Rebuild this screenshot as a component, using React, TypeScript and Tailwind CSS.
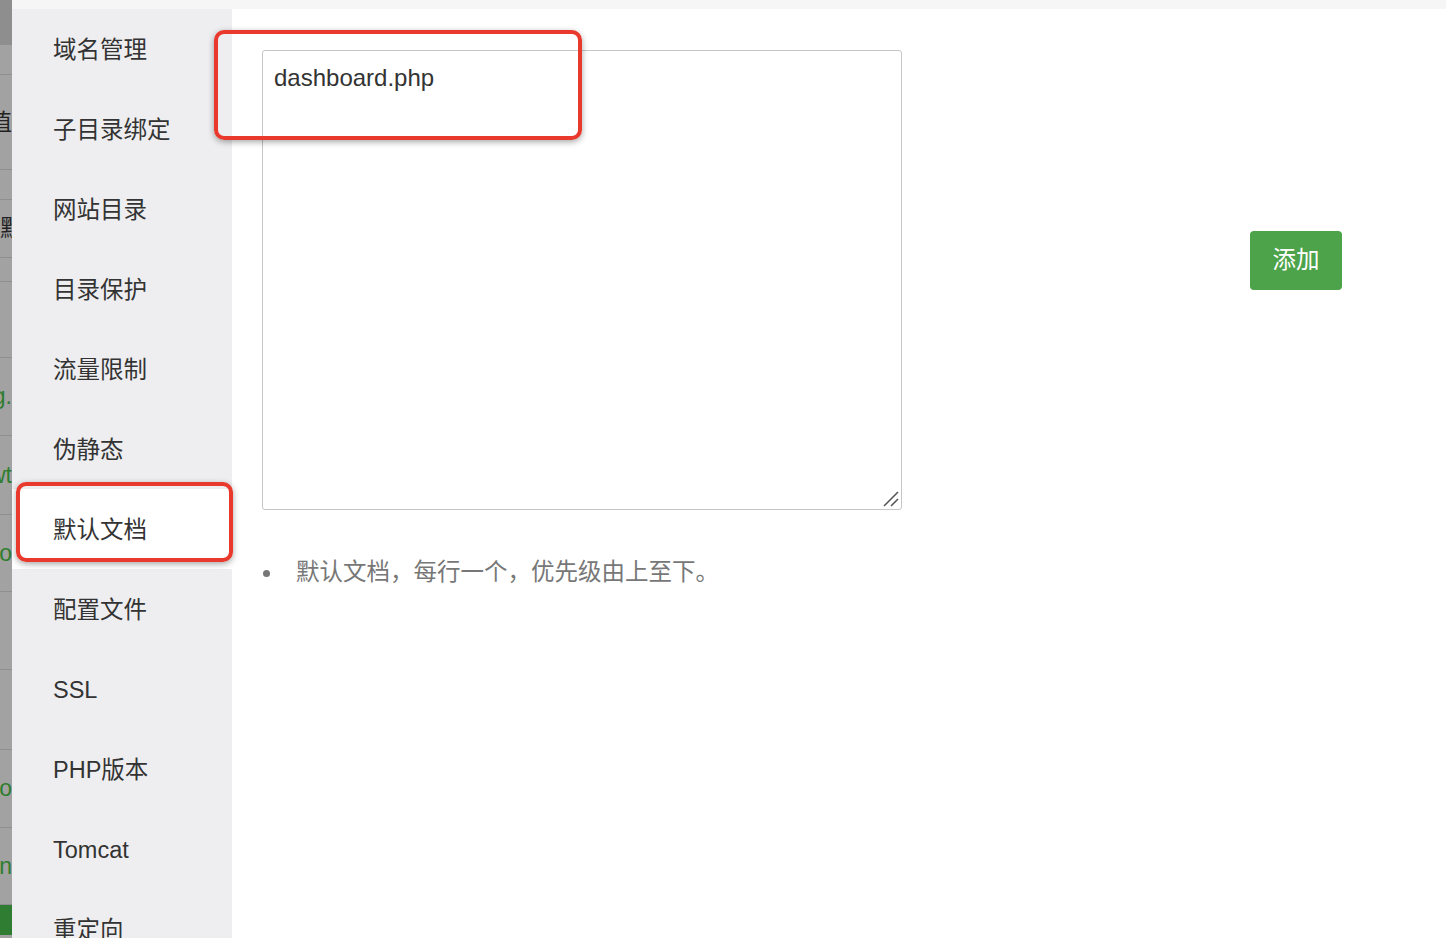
import React from "react";

const cjk = '"Liberation Sans", "Noto Sans CJK SC", sans-serif';

const menu = [
  "域名管理",
  "子目录绑定",
  "网站目录",
  "目录保护",
  "流量限制",
  "伪静态",
  "默认文档",
  "配置文件",
  "SSL",
  "PHP版本",
  "Tomcat",
  "重定向",
];

const strip: { h: number; text?: string; green?: boolean; end?: boolean; dark?: boolean }[] = [
  { h: 45, dark: true },
  { h: 30 },
  { h: 95, text: "数值", end: true },
  { h: 30 },
  { h: 58, text: "默认", end: false },
  { h: 24 },
  { h: 76 },
  { h: 78, text: "www.log.", green: true, end: true },
  { h: 79, text: "wwwt", green: true, end: true },
  { h: 77, text: "abco", green: true, end: true },
  { h: 78 },
  { h: 80 },
  { h: 78, text: "abcoo", green: true, end: true },
  { h: 77, text: "an", green: true, end: true },
];

export default function App() {
  return (
    <div
      className="relative w-[1446px] h-[938px] overflow-hidden bg-white flex"
      style={{ fontFamily: cjk }}
    >
      {/* left underlying page strip */}
      <div className="w-[12px] h-full bg-[#a2a2a2] flex flex-col overflow-hidden shrink-0">
        {strip.map((s, i) => (
          <div
            key={i}
            className={`shrink-0 w-full flex items-center overflow-hidden whitespace-nowrap border-b border-[#8f8f8f] text-[23px] ${
              s.end ? "justify-end" : "justify-start"
            } ${s.dark ? "bg-[#8e8e8e]" : ""} ${s.green ? "text-[#2f7d2f]" : "text-[#222]"}`}
            style={{ height: s.h }}
          >
            {s.text ? <span>{s.text}</span> : null}
          </div>
        ))}
        <div className="h-[30px] w-full bg-[#2f7d32] shrink-0" />
      </div>

      <div className="flex-1 flex flex-col">
        <div className="h-[9px] bg-[#f6f6f6] shrink-0" />
        <div className="flex flex-1">
          {/* sidebar */}
          <div className="w-[220px] bg-[#eeeef0] flex flex-col shrink-0">
            {menu.map((m) => (
              <div
                key={m}
                className={`h-[80px] shrink-0 flex items-center pl-[41px] pt-[4px] text-[23.5px] text-[#333] ${
                  m === "默认文档" ? "bg-white" : ""
                }`}
              >
                {m}
              </div>
            ))}
          </div>

          {/* content */}
          <div className="flex-1 pl-[30px] pt-[41px]">
            <div className="flex items-start">
              <div className="relative w-[640px] h-[460px]">
                <textarea
                  defaultValue="dashboard.php"
                  className="w-full h-full border border-[#c6c6c6] rounded-[3px] px-[11px] py-[12px] text-[24px] leading-[30px] text-[#333] outline-none resize-none"
                  style={{ fontFamily: '"Liberation Sans", Arial, sans-serif' }}
                />
                <svg
                  className="absolute right-[3px] bottom-[3px]"
                  width="16"
                  height="16"
                  viewBox="0 0 16 16"
                >
                  <line x1="1" y1="15" x2="15" y2="1" stroke="#555" strokeWidth="1.6" />
                  <line x1="8" y1="15" x2="15" y2="8" stroke="#555" strokeWidth="1.6" />
                </svg>
              </div>
              <button className="ml-[348px] mt-[181px] w-[92px] h-[59px] rounded-[4px] bg-[#4ca34a] text-white text-[23.5px] flex items-center justify-center">
                添加
              </button>
            </div>
            <ul className="mt-[48px]">
              <li className="flex items-center h-[30px] text-[23.5px] text-[#777]">
                <span className="w-[7px] h-[7px] rounded-full bg-[#777] ml-[1px] mr-[26px]" />
                默认文档，每行一个，优先级由上至下。
              </li>
            </ul>
          </div>
        </div>
      </div>

      {/* annotation boxes */}
      <div className="absolute left-[214px] top-[30px] w-[368px] h-[110px] border-[4px] border-[#e8392c] rounded-[10px] shadow-[0_2px_6px_rgba(0,0,0,0.35)]" />
      <div className="absolute left-[16px] top-[482px] w-[217px] h-[80px] border-[4px] border-[#e8392c] rounded-[10px] shadow-[0_2px_6px_rgba(0,0,0,0.35)]" />
    </div>
  );
}
